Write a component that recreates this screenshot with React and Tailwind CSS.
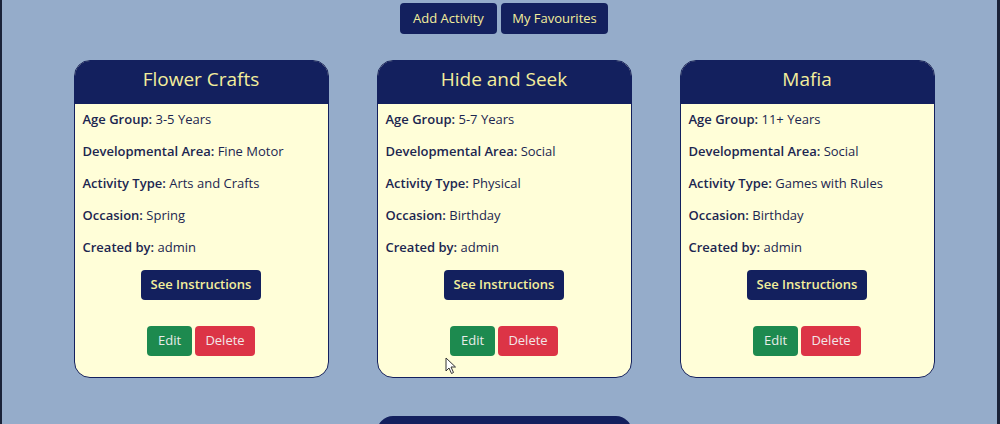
const activities = [
  { title: "Flower Crafts", age: "3-5 Years", area: "Fine Motor", type: "Arts and Crafts", occasion: "Spring", by: "admin" },
  { title: "Hide and Seek", age: "5-7 Years", area: "Social", type: "Physical", occasion: "Birthday", by: "admin" },
  { title: "Mafia", age: "11+ Years", area: "Social", type: "Games with Rules", occasion: "Birthday", by: "admin" },
];

const Row = ({ label, value }) => (
  <p className="mb-3 leading-5">
    <span className="font-semibold">{label}:</span> {value}
  </p>
);

const Card = ({ item }) => (
  <div className="w-[255px] h-[318px] bg-[#fffed8] border-[1.5px] border-[#13205e] rounded-[16px] overflow-hidden flex flex-col">
    <div className="h-[43px] bg-[#13205e] pt-1 text-center text-[19px] leading-7 text-[#f3ee9c]">{item.title}</div>
    <div className="px-2 pt-[5px] text-[13px] text-[#1c2650]">
      <Row label="Age Group" value={item.age} />
      <Row label="Developmental Area" value={item.area} />
      <Row label="Activity Type" value={item.type} />
      <Row label="Occasion" value={item.occasion} />
      <Row label="Created by" value={item.by} />
    </div>
    <div className="flex justify-center mt-[1px]">
      <button className="h-[30px] w-[120px] rounded-[4px] bg-[#13205e] text-[#f3ee9c] text-[13px] font-semibold">See Instructions</button>
    </div>
    <div className="flex justify-center gap-[3px] mt-[26px]">
      <button className="h-[30px] w-[45px] rounded-[4px] bg-[#1d8a4f] text-[#e9ece9] text-[13px]">Edit</button>
      <button className="h-[30px] w-[60px] rounded-[4px] bg-[#dc3446] text-[#f2e6e8] text-[13px]">Delete</button>
    </div>
  </div>
);

export default function App() {
  return (
    <div className="h-[424px] overflow-hidden bg-[#95acca] border-l-2 border-r-[3px] border-[#1a2238] relative" style={{ fontFamily: '"Open Sans", "Noto Sans", sans-serif' }}>
      <div className="pl-[9px]">
        <div className="flex justify-center gap-[4px] pt-[3px]">
          <button className="h-[31px] w-[97px] rounded-[4px] bg-[#13205e] text-[#f3ee9c] text-[13px]">Add Activity</button>
          <button className="h-[31px] w-[107px] rounded-[4px] bg-[#13205e] text-[#f3ee9c] text-[13px]">My Favourites</button>
        </div>
        <div className="flex flex-wrap justify-center gap-x-[48px] gap-y-[38px] mt-[26px]">
          {activities.map((a) => (
            <Card key={a.title} item={a} />
          ))}
          <div className="w-[255px] h-[43px] bg-[#13205e] rounded-t-[16px]" />
        </div>
      </div>
      <svg className="absolute left-[443px] top-[357px]" width="12" height="18" viewBox="0 0 12 18">
        <path d="M1 1 L1 14 L4 11 L6.5 16.5 L8.5 15.5 L6 10 L10.5 10 Z" fill="#fff" stroke="#333" strokeWidth="1" strokeLinejoin="round" />
      </svg>
    </div>
  );
}
